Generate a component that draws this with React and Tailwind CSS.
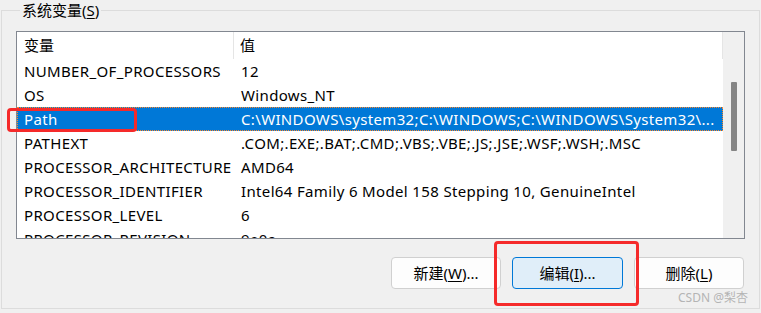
import React from "react";

const rows = [
  ["NUMBER_OF_PROCESSORS", "12"],
  ["OS", "Windows_NT"],
  ["Path", "C:\\WINDOWS\\system32;C:\\WINDOWS;C:\\WINDOWS\\System32\\...", true],
  ["PATHEXT", ".COM;.EXE;.BAT;.CMD;.VBS;.VBE;.JS;.JSE;.WSF;.WSH;.MSC"],
  ["PROCESSOR_ARCHITECTURE", "AMD64"],
  ["PROCESSOR_IDENTIFIER", "Intel64 Family 6 Model 158 Stepping 10, GenuineIntel"],
  ["PROCESSOR_LEVEL", "6"],
  ["PROCESSOR_REVISION", "9e0a"],
];

export default function App() {
  return (
    <div
      className="relative w-[761px] h-[313px] overflow-hidden bg-[#f0f0f0] text-black text-[15px]"
      style={{ fontFamily: '"Noto Sans", "Noto Sans CJK SC", sans-serif' }}
    >
      <fieldset className="ml-[1px] w-[759px] h-[309px] border border-[#dcdcdc] pl-[14px] pr-[14px]">
        <legend className="ml-[4px] px-[2px] h-[20px] leading-[20px]">
          系统变量(<span className="underline underline-offset-2">S</span>)
        </legend>
        <div className="mt-[11px] w-[729px] h-[208px] border border-[#828790] bg-white flex">
          <div className="w-[706px] h-full overflow-hidden flex flex-col tracking-[0.35px]">
            <div className="h-[27px] shrink-0 flex items-center">
              <div className="w-[217px] h-full border-r border-[#e5e5e5] pl-[7px] flex items-center tracking-normal">变量</div>
              <div className="flex-1 h-full border-r border-[#e5e5e5] pl-[6px] flex items-center tracking-normal">值</div>
            </div>
            {rows.map(([k, v, sel]) => (
              <div
                key={k}
                className={
                  "h-[24px] shrink-0 flex items-center whitespace-nowrap " +
                  (sel ? "bg-[#0078d7] text-white border border-dotted border-[#ff8728]" : "border border-transparent")
                }
              >
                <div className="w-[217px] pl-[6px]">{k}</div>
                <div className="flex-1 pl-[6px]">{v}</div>
              </div>
            ))}
          </div>
          <div className="flex-1 h-full bg-[#f0f0f0] flex justify-center">
            <div className="mt-[50px] w-[6px] h-[69px] bg-[#858585] rounded-[1px]" />
          </div>
        </div>
        <div className="mt-[18px] flex justify-end gap-[11px] pr-[1px]">
          <button className="w-[110px] h-[32px] rounded-[4px] border border-[#d0d0d0] bg-[#fdfdfd]">
            新建(<span className="underline underline-offset-2">W</span>)...
          </button>
          <button className="w-[111px] h-[32px] rounded-[4px] border border-[#0078d7] bg-[#e0eef9]">
            编辑(<span className="underline underline-offset-2">I</span>)...
          </button>
          <button className="w-[110px] h-[32px] rounded-[4px] border border-[#d0d0d0] bg-[#fdfdfd]">
            删除(<span className="underline underline-offset-2">L</span>)
          </button>
        </div>
      </fieldset>
      <div className="absolute left-[7px] top-[108px] w-[130px] h-[24px] border-[3px] border-[#f52a2a] rounded-[4px]" />
      <div className="absolute left-[494px] top-[241px] w-[145px] h-[65px] border-[3px] border-[#f52a2a] rounded-[4px]" />
      <div className="absolute left-[678px] top-[290px] text-[12px] text-[#b4b4b4] leading-[16px]">CSDN @梨杏</div>
    </div>
  );
}
